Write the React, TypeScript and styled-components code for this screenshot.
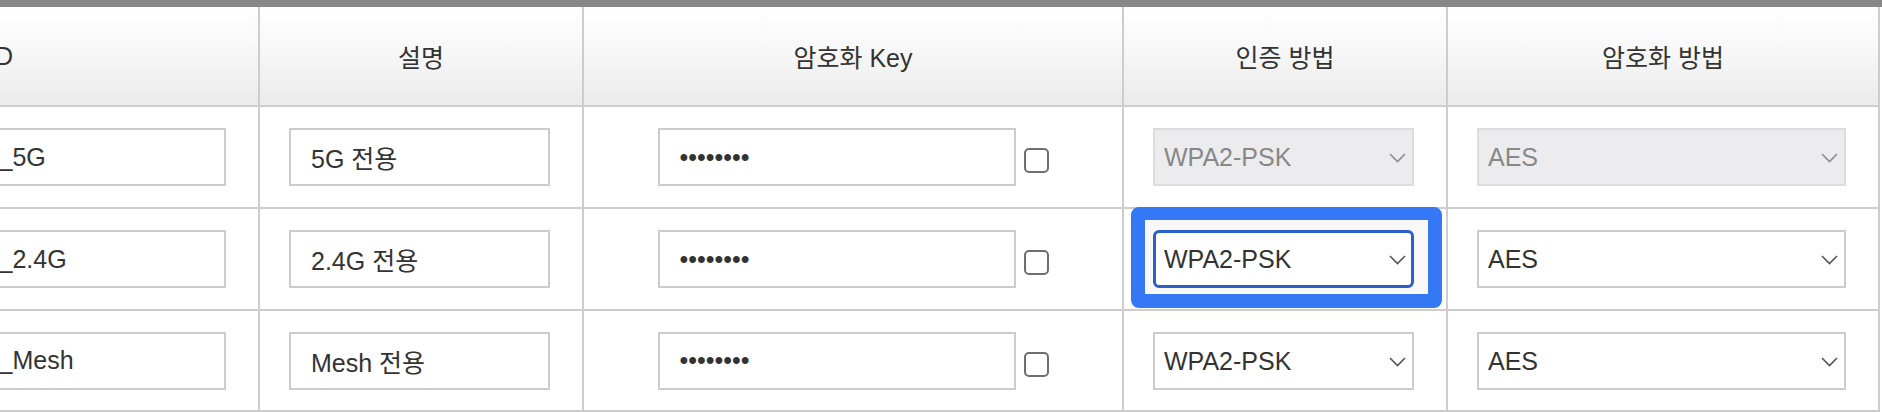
import React from "react";
import styled, { createGlobalStyle, css } from "styled-components";

const Global = createGlobalStyle`
  html, body { margin: 0; padding: 0; background: #fff; }
  body { font-family: "Liberation Sans", "Noto Sans CJK KR", Arial, sans-serif; color: #333; }
  * { box-sizing: border-box; }
`;

const Page = styled.div`
  width: 1882px;
  height: 412px;
  overflow: hidden;
  background: #fff;
`;

const TopBar = styled.div`
  height: 7px;
  background: #878787;
`;

const Grid = styled.div`
  display: grid;
  grid-template-columns: 548px 322px 538px 322px 430px;
  grid-template-rows: 98px 100px 100px 99px;
  gap: 2px;
  background: #cdcdcd;
  border-right: 2px solid #cdcdcd;
  border-bottom: 2px solid #cdcdcd;
  margin-left: -290px;
  width: max-content;
  font-size: 25px;
`;

const HeadCell = styled.div`
  display: flex;
  align-items: center;
  justify-content: center;
  background: linear-gradient(to bottom, #ffffff 0%, #f6f6f6 50%, #ebebeb 100%);
  color: #333;
  font-size: 25px;
`;

const Cell = styled.div<{ $center?: boolean }>`
  display: flex;
  align-items: center;
  justify-content: ${(p) => (p.$center ? "center" : "flex-start")};
  gap: 8px;
  padding: 0 32px 0 29px;
  background: #fff;
  ${(p) => p.$center && css`padding: 0;`}
`;

const TextInput = styled.input<{ $w?: number }>`
  height: 58px;
  width: ${(p) => (p.$w ? `${p.$w}px` : "100%")};
  border: 2px solid #cccccc;
  padding: 0 20px;
  font: inherit;
  font-size: 25px;
  color: #333;
  background: #fff;
  outline: none;
  border-radius: 0;
`;

const Check = styled.input`
  appearance: none;
  width: 25px;
  height: 25px;
  margin: 7px 0 0 0;
  border: 2px solid #6e6e6e;
  border-radius: 5px;
  background: #fff;
`;

const SelectWrap = styled.div<{ $focused?: boolean }>`
  position: relative;
  width: 100%;
  height: 58px;
  ${(p) =>
    p.$focused &&
    css`
      &::before {
        content: "";
        position: absolute;
        left: -22px;
        right: -28px;
        top: -23px;
        bottom: -20px;
        border: 14px solid #3478f6;
        border-top-width: 13px;
        border-radius: 8px;
        background: #f8f8f8;
        z-index: 0;
      }
    `}
`;

const Select = styled.select<{ $focused?: boolean }>`
  position: relative;
  z-index: 1;
  appearance: none;
  width: 100%;
  height: 58px;
  padding: 0 40px 0 9px;
  font: inherit;
  font-size: 25px;
  color: #333;
  background: #fff;
  border: 2px solid #cccccc;
  border-radius: 0;
  outline: none;
  &:disabled {
    background: #ececee;
    border-color: #dcdcdc;
    color: #888;
    opacity: 1;
  }
  ${(p) =>
    p.$focused &&
    css`
      border: 3px solid #2c5fcc;
      border-radius: 6px;
      padding-left: 8px;
    `}
`;

const Chevron = styled.svg<{ $disabled?: boolean }>`
  position: absolute;
  z-index: 2;
  right: 8px;
  top: 25px;
  width: 17px;
  height: 10px;
  pointer-events: none;
  stroke: ${(p) => (p.$disabled ? "#8d8d8d" : "#555")};
`;

type Row = {
  ssid: string;
  desc: string;
  disabled?: boolean;
  focused?: boolean;
};

const rows: Row[] = [
  { ssid: "SKT_WiFiGIGA7C1E_5G", desc: "5G 전용", disabled: true },
  { ssid: "SKT_WiFiGIGA7C1E_2.4G", desc: "2.4G 전용", focused: true },
  { ssid: "SKT_WiFiGIGA7C1E_Mesh", desc: "Mesh 전용" },
];

function Dropdown({
  value,
  options,
  disabled,
  focused,
}: {
  value: string;
  options: string[];
  disabled?: boolean;
  focused?: boolean;
}) {
  return (
    <SelectWrap $focused={focused}>
      <Select defaultValue={value} disabled={disabled} $focused={focused}>
        {options.map((o) => (
          <option key={o} value={o}>
            {o}
          </option>
        ))}
      </Select>
      <Chevron $disabled={disabled} viewBox="0 0 17 10" fill="none" strokeWidth="1.6">
        <polyline points="1,1 8.5,8.5 16,1" />
      </Chevron>
    </SelectWrap>
  );
}

export default function App() {
  return (
    <>
      <Global />
      <Page>
        <TopBar />
        <Grid>
          <HeadCell>SSID</HeadCell>
          <HeadCell>설명</HeadCell>
          <HeadCell>암호화 Key</HeadCell>
          <HeadCell>인증 방법</HeadCell>
          <HeadCell>암호화 방법</HeadCell>
          {rows.map((r) => (
            <React.Fragment key={r.desc}>
              <Cell>
                <TextInput defaultValue={r.ssid} />
              </Cell>
              <Cell>
                <TextInput defaultValue={r.desc} />
              </Cell>
              <Cell $center>
                <TextInput type="password" defaultValue="12345678" $w={358} />
                <Check type="checkbox" />
              </Cell>
              <Cell>
                <Dropdown
                  value="WPA2-PSK"
                  options={["WPA-PSK", "WPA2-PSK", "WPAPSK/WPA2PSK"]}
                  disabled={r.disabled}
                  focused={r.focused}
                />
              </Cell>
              <Cell>
                <Dropdown value="AES" options={["AES", "TKIP", "TKIP/AES"]} disabled={r.disabled} />
              </Cell>
            </React.Fragment>
          ))}
        </Grid>
      </Page>
    </>
  );
}
